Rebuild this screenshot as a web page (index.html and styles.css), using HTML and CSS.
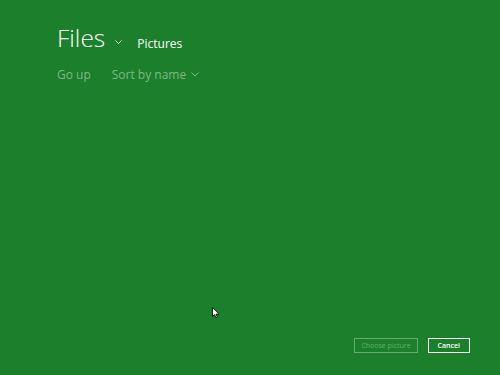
FILE: index.html
```html
<!DOCTYPE html>
<html lang="en">
<head>
    <meta charset="UTF-8">
    <title>Files</title>
    <link rel="stylesheet" href="styles.css">
</head>
<body>
    <div class="picker">
        <div class="header">
            <h1 class="title">Files</h1>
            <svg class="chevron big" width="7" height="4" viewBox="0 0 7 4"><path d="M0.5 0.5 L3.5 3.5 L6.5 0.5" fill="none" stroke="#fff" stroke-width="1"/></svg>
            <span class="location">Pictures</span>
        </div>
        <div class="commands">
            <span class="cmd">Go up</span>
            <span class="cmd">Sort by name<svg class="chevron" width="8" height="5" viewBox="0 0 8 5"><path d="M0.5 0.5 L4 4 L7.5 0.5" fill="none" stroke="currentColor" stroke-width="1"/></svg></span>
        </div>
        <div class="content">
            <svg class="cursor" width="8" height="12" viewBox="0 0 8 12"><path d="M0.5 0.5 L0.5 9.5 L2.6 7.6 L4 10.8 L5.3 10.2 L4 7.1 L7 7.1 Z" fill="#fff" stroke="#000" stroke-width="0.8"/></svg>
        </div>
        <div class="footer">
            <button class="btn disabled">Choose picture</button>
            <button class="btn">Cancel</button>
        </div>
    </div>
</body>
</html>
```

FILE: styles.css
```css
body {
    margin: 0;
    background-color: #1b7f2b;
    font-family: "Open Sans", sans-serif;
    color: #fff;
}
.picker {
    width: 500px;
    height: 375px;
    display: flex;
    flex-direction: column;
}
.header {
    display: flex;
    align-items: flex-start;
    padding: 22px 0 0 57px;
    height: 32px;
}
.title {
    margin: 0;
    font-weight: 300;
    font-size: 24.5px;
    line-height: 32px;
}
.chevron.big {
    margin: 18px 0 0 10px;
}
.location {
    margin: 14px 0 0 15px;
    font-size: 12px;
    line-height: 16px;
}
.commands {
    display: flex;
    gap: 21px;
    padding: 13px 0 0 57px;
    font-size: 12px;
    line-height: 16px;
    color: #7fb886;
}
.cmd .chevron {
    margin-left: 5px;
    vertical-align: 2px;
}
.content {
    flex: 1;
    position: relative;
}
.cursor {
    position: absolute;
    left: 212px;
    top: 224px;
}
.footer {
    display: flex;
    justify-content: flex-end;
    gap: 10px;
    padding: 0 30px 22px 0;
}
.btn {
    font-family: "Open Sans", sans-serif;
    font-size: 7px;
    font-weight: 600;
    color: #fff;
    background: transparent;
    border: 1px solid #fff;
    height: 15px;
    padding: 0 9px;
}
.btn.disabled {
    color: #6bab73;
    border-color: #6bab73;
    font-weight: 400;
    padding: 0 6px;
}
```
